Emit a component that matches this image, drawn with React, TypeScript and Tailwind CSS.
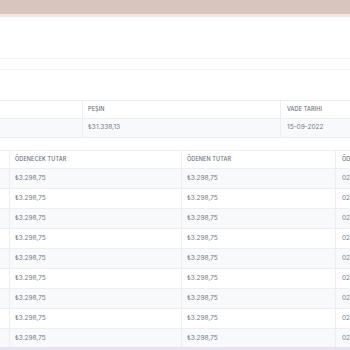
const rows = Array.from({ length: 9 }, (_, i) => ({
  amount: "₺3.298,75",
  paid: "₺3.298,75",
  date: `02-${String(((i + 9) % 12) + 1).padStart(2, "0")}-2022`,
}));

export default function App() {
  return (
    <div className="relative w-[350px] h-[350px] overflow-hidden bg-white font-['Inter',sans-serif] text-[#747b83]">
      {/* top bar */}
      <div className="h-[14px] bg-[#d8c5bd]" />
      <div className="h-[3px] bg-[#f3e5e0]" />

      {/* card header lines */}
      <div className="mt-[41px] h-[12px] border-y border-[#f2f2f3]" />

      {/* summary table */}
      <div className="mt-[30px] w-[420px] text-[6.5px]">
        <div className="flex h-[19px] items-center border-y border-[#eceef1] font-medium uppercase text-[5.5px] tracking-[0.02em] text-[#6b7178]">
          <div className="w-[83px] h-full border-r border-[#eceef1]" />
          <div className="w-[198px] h-full flex items-center pl-[5px] border-r border-[#eceef1]">Peşin</div>
          <div className="flex-1 h-full flex items-center pl-[6px]">Vade Tarihi</div>
        </div>
        <div className="flex h-[19px] items-center bg-[#f8f9fa] border-b border-[#eceef1]">
          <div className="w-[83px] h-full border-r border-[#eceef1]" />
          <div className="w-[198px] h-full flex items-center pl-[5px] border-r border-[#eceef1]">₺31.338,13</div>
          <div className="flex-1 h-full flex items-center pl-[6px]">15-09-2022</div>
        </div>
      </div>

      {/* installments table */}
      <div className="mt-[12px] w-[420px] text-[6.5px]">
        <div className="flex h-[19px] items-center border-y border-[#eceef1] font-medium uppercase text-[5.5px] tracking-[0.02em] text-[#6b7178]">
          <div className="w-[10px] h-full border-r border-[#eceef1]" />
          <div className="w-[172px] h-full flex items-center pl-[5px] border-r border-[#eceef1]">Ödenecek Tutar</div>
          <div className="w-[154px] h-full flex items-center pl-[5px] border-r border-[#eceef1]">Ödenen Tutar</div>
          <div className="flex-1 h-full flex items-center pl-[6px] whitespace-nowrap">Ödeme Tarihi</div>
        </div>
        {rows.map((r, i) => (
          <div
            key={i}
            className={`flex h-[20px] items-center border-b border-[#eceef1] ${i % 2 === 0 ? "bg-[#f8f9fa]" : "bg-white"}`}
          >
            <div className="w-[10px] h-full border-r border-[#eceef1]" />
            <div className="w-[172px] h-full flex items-center pl-[5px] border-r border-[#eceef1]">{r.amount}</div>
            <div className="w-[154px] h-full flex items-center pl-[5px] border-r border-[#eceef1]">{r.paid}</div>
            <div className="flex-1 h-full flex items-center pl-[6px] whitespace-nowrap">{r.date}</div>
          </div>
        ))}
      </div>

      {/* bottom strip */}
      <div className="absolute bottom-0 left-0 right-0 h-[3px] bg-[#e6e2ef]" />
    </div>
  );
}
